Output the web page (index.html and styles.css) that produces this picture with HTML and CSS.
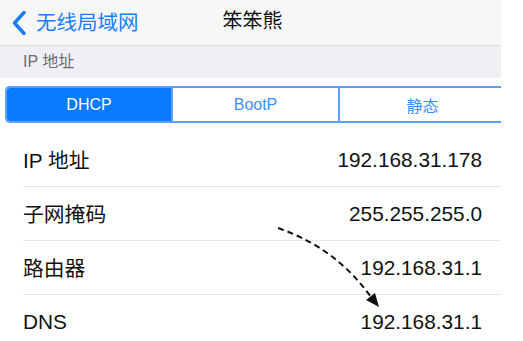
FILE: index.html
```html
<!DOCTYPE html>
<html lang="zh">
<head>
<meta charset="utf-8">
<link rel="stylesheet" href="styles.css">
</head>
<body>
<div class="screen">
  <div class="navbar">
    <div class="back">
      <svg class="chev" width="14" height="24" viewBox="0 0 14 24"><path d="M12 1.5 L2.5 12 L12 22.5" fill="none" stroke="#1a7cf7" stroke-width="3.4" stroke-linecap="round" stroke-linejoin="round"/></svg>
      <span class="back-text">无线局域网</span>
    </div>
    <div class="title">笨笨熊</div>
  </div>
  <div class="section-header">IP 地址</div>
  <div class="seg-wrap">
    <div class="segmented">
      <div class="seg active">DHCP</div>
      <div class="seg">BootP</div>
      <div class="seg">静态</div>
    </div>
  </div>
  <div class="list">
    <div class="row"><span class="label">IP 地址</span><span class="value">192.168.31.178</span></div>
    <div class="row"><span class="label">子网掩码</span><span class="value">255.255.255.0</span></div>
    <div class="row"><span class="label">路由器</span><span class="value">192.168.31.1</span></div>
    <div class="row"><span class="label">DNS</span><span class="value">192.168.31.1</span></div>
  </div>
  <svg class="arrow" width="523" height="341" viewBox="0 0 523 341">
    <path d="M278 228 Q336 248 371 297" fill="none" stroke="#111" stroke-width="2" stroke-dasharray="6 4"/>
    <path d="M379 307 L366 300 L375 293 Z" fill="#111"/>
  </svg>
</div>
</body>
</html>
```
FILE: styles.css
```css
html, body {
  margin: 0;
  padding: 0;
  background: #ffffff;
}
body {
  width: 523px;
  height: 341px;
  overflow: hidden;
  font-family: "Liberation Sans", "Noto Sans CJK SC", sans-serif;
}
.screen {
  position: relative;
  width: 501px;
  height: 341px;
  overflow: hidden;
  background: #ffffff;
}
.navbar {
  position: relative;
  height: 45px;
  background: #f7f7f8;
  border-bottom: 1px solid #dcdcdf;
  display: flex;
  align-items: center;
}
.back {
  display: flex;
  align-items: center;
  padding-left: 12px;
  gap: 10px;
  color: #1a7cf7;
}
.chev {
  display: block;
  margin-top: 1px;
}
.back-text {
  font-size: 20.5px;
  line-height: 24px;
}
.title {
  position: absolute;
  left: 0;
  right: 0;
  top: 0;
  height: 45px;
  line-height: 42px;
  text-align: center;
  font-size: 20px;
  color: #111;
  pointer-events: none;
  padding-left: 4px;
}
.section-header {
  height: 32px;
  background: #efeff4;
  color: #6d6d72;
  font-size: 16px;
  line-height: 31px;
  padding-left: 23px;
}
.seg-wrap {
  padding: 8px 0 0 5px;
  height: 37px;
}
.segmented {
  display: flex;
  width: 502px;
  height: 37px;
  box-sizing: border-box;
  border: 2px solid #5ba2fb;
  border-right: none;
  border-radius: 5px 0 0 5px;
  overflow: hidden;
}
.seg {
  flex: 0 0 auto;
  width: 167px;
  display: flex;
  align-items: center;
  justify-content: center;
  font-size: 16px;
  color: #3d8ef9;
  border-left: 2px solid #5ba2fb;
  box-sizing: border-box;
}
.seg:first-child {
  border-left: none;
  width: 164px;
}
.seg.active {
  background: #0a7aff;
  color: #ffffff;
}
.list {
  margin-top: 10px;
  padding-left: 23px;
}
.row {
  height: 54px;
  box-sizing: border-box;
  display: flex;
  align-items: center;
  justify-content: space-between;
  padding-right: 19px;
  border-bottom: 1px solid #e6e6e8;
  font-size: 20.8px;
  color: #111;
}
.row:last-child {
  border-bottom: none;
}
.label {
  padding-bottom: 1px;
}
.arrow {
  position: absolute;
  left: 0;
  top: 0;
  pointer-events: none;
}
```
